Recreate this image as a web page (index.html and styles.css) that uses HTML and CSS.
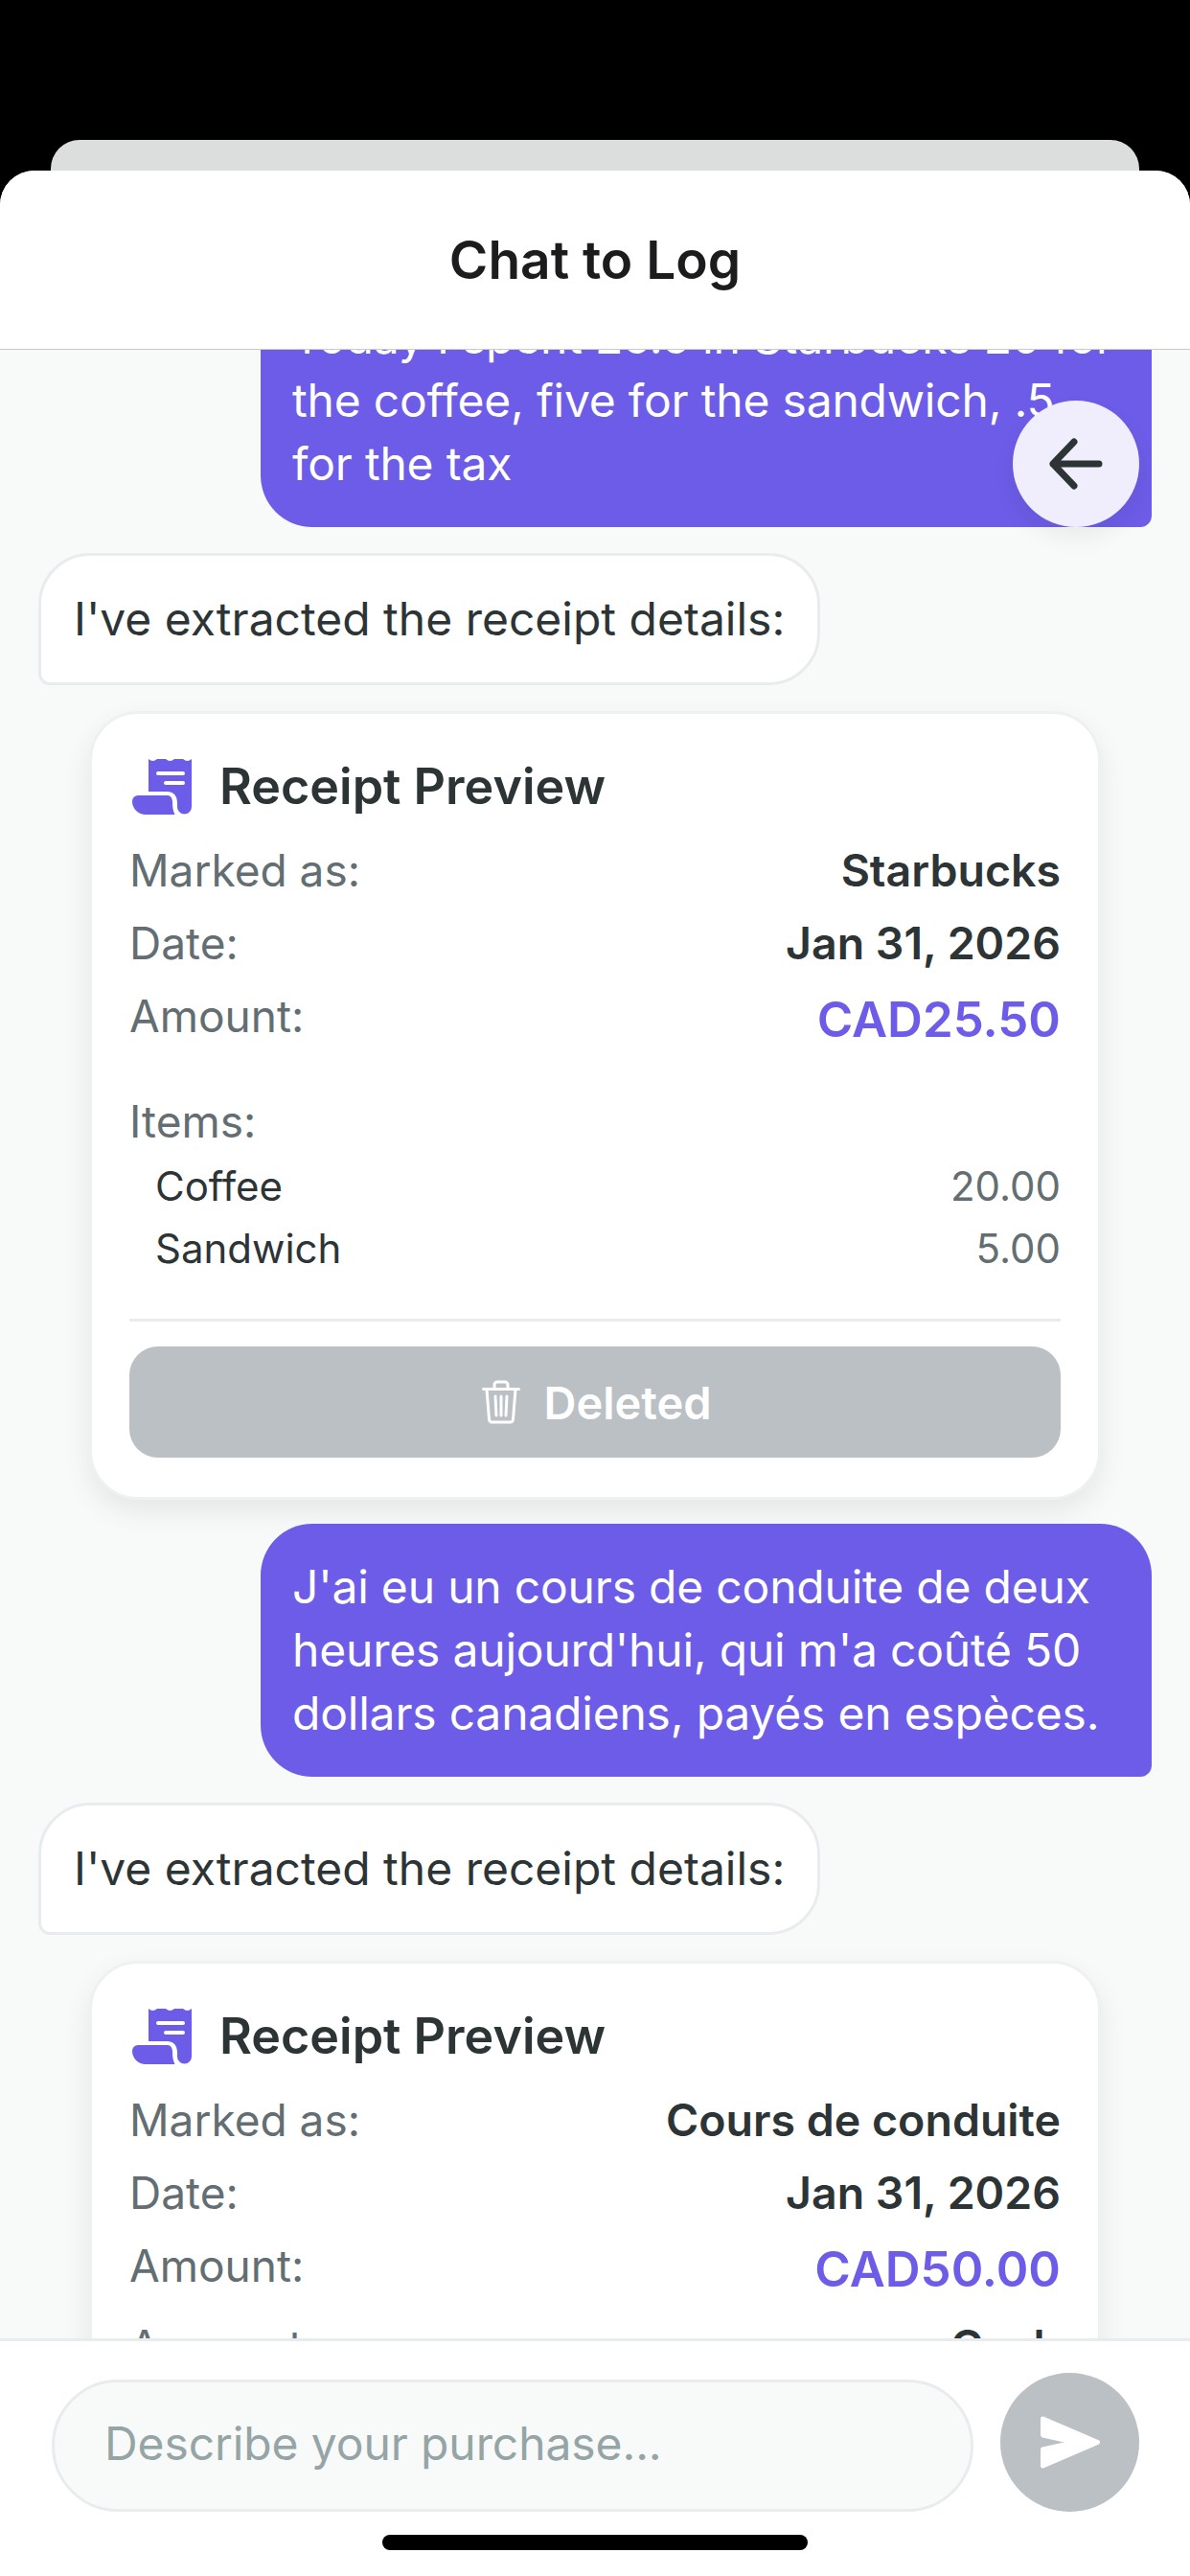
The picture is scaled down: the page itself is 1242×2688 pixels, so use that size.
FILE: index.html
```html
<!DOCTYPE html>
<html lang="en">
<head>
   <meta charset="UTF-8">
   <meta name="viewport" content="width=device-width, initial-scale=1.0">
   <title>Chat to Log</title>
   <link rel="stylesheet" href="styles.css">
</head>
<body>
   <div class="backdrop">
      <div class="peek"></div>
   </div>

   <div class="sheet">
      <header class="sheet-header">Chat to Log</header>

      <main class="chat">
         <div class="chat-list">
            <div class="bubble bubble-user">Today I spent 25.5 in Starbucks 20 for the coffee, five for the sandwich, .5 for the tax</div>
            <div class="bubble bubble-bot">I've extracted the receipt details:</div>

            <section class="receipt">
               <div class="receipt-title">
                  <svg class="receipt-icon" viewBox="0 0 62 58">
                     <path fill="#6c5ce7" d="M17 0q4.500 4 9 0t9 0 9 0 9 0 9 0V50a7.500 7.500 0 0 1-15 0V46c0-8-4-12-11-12H17Z"/>
                     <path fill="#6c5ce7" d="M6 38H37c3 0 5 3 5 7 0 5 .5 9 2.500 13H14A14 14 0 0 1 0 44 6 6 0 0 1 6 38Z"/>
                     <path stroke="#fff" stroke-width="4" stroke-linecap="round" d="M27 15H53M35 25H53"/>
                  </svg>
                  <span>Receipt Preview</span>
               </div>
               <div class="row"><span class="row-label">Marked as:</span><span class="row-value">Starbucks</span></div>
               <div class="row"><span class="row-label">Date:</span><span class="row-value">Jan 31, 2026</span></div>
               <div class="row"><span class="row-label">Amount:</span><span class="row-amount">CAD25.50</span></div>
               <div class="items-label">Items:</div>
               <div class="item"><span>Coffee</span><span class="item-price">20.00</span></div>
               <div class="item"><span>Sandwich</span><span class="item-price">5.00</span></div>
               <div class="receipt-divider"></div>
               <button class="deleted-btn">
                  <svg class="trash-icon" viewBox="0 0 40 46" fill="none" stroke="#fff" stroke-width="3" stroke-linecap="round" stroke-linejoin="round">
                     <path d="M1.500 9.500H38.500M13 9V5a3 3 0 0 1 3-3h8a3 3 0 0 1 3 3v4M5 10l2.500 31a3 3 0 0 0 3 3h19a3 3 0 0 0 3-3L35 10M14 17l1 20M20 17v20M26 17l-1 20"/>
                  </svg>
                  <span>Deleted</span>
               </button>
            </section>

            <div class="bubble bubble-user">J'ai eu un cours de conduite de deux heures aujourd'hui, qui m'a coûté 50 dollars canadiens, payés en espèces.</div>
            <div class="bubble bubble-bot">I've extracted the receipt details:</div>

            <section class="receipt">
               <div class="receipt-title">
                  <svg class="receipt-icon" viewBox="0 0 62 58">
                     <path fill="#6c5ce7" d="M17 0q4.500 4 9 0t9 0 9 0 9 0 9 0V50a7.500 7.500 0 0 1-15 0V46c0-8-4-12-11-12H17Z"/>
                     <path fill="#6c5ce7" d="M6 38H37c3 0 5 3 5 7 0 5 .5 9 2.500 13H14A14 14 0 0 1 0 44 6 6 0 0 1 6 38Z"/>
                     <path stroke="#fff" stroke-width="4" stroke-linecap="round" d="M27 15H53M35 25H53"/>
                  </svg>
                  <span>Receipt Preview</span>
               </div>
               <div class="row"><span class="row-label">Marked as:</span><span class="row-value">Cours de conduite</span></div>
               <div class="row"><span class="row-label">Date:</span><span class="row-value">Jan 31, 2026</span></div>
               <div class="row"><span class="row-label">Amount:</span><span class="row-amount">CAD50.00</span></div>
               <div class="row"><span class="row-label">Account:</span><span class="row-value">Cash</span></div>
            </section>
         </div>
      </main>

      <footer class="composer">
         <div class="composer-row">
            <input class="composer-input" type="text" placeholder="Describe your purchase...">
            <button class="send-btn">
               <svg class="send-icon" viewBox="0 0 62 55">
                  <path fill="#fff" stroke="#fff" stroke-width="5" stroke-linejoin="round" d="M2.500 3 59.500 27.500 2.500 52V35L36 27.500 2.500 20Z"/>
               </svg>
            </button>
         </div>
         <div class="home-bar"></div>
      </footer>

      <button class="back-btn">
         <svg class="back-icon" viewBox="0 0 56 54" fill="none" stroke="#2d3436" stroke-width="7" stroke-linecap="round" stroke-linejoin="round">
            <path d="M52 27H4M26 4 4 27l22 23"/>
         </svg>
      </button>
   </div>
</body>
</html>
```

FILE: styles.css
```css
* {
   box-sizing: border-box;
}
html, body {
   margin: 0;
   height: 2688px;
   overflow: hidden;
}
body {
   display: flex;
   flex-direction: column;
   background: #000;
   font-family: Inter, "Liberation Sans", sans-serif;
   color: #2d3436;
}
.backdrop {
   padding: 146px 53px 0;
}
.peek {
   height: 32px;
   background: #dcdddd;
   border-radius: 30px 30px 0 0;
}
.sheet {
   position: relative;
   flex: 1;
   min-height: 0;
   display: flex;
   flex-direction: column;
   background: #fff;
   border-radius: 36px 36px 0 0;
   overflow: hidden;
}
.sheet-header {
   height: 187px;
   flex: none;
   display: flex;
   align-items: center;
   justify-content: center;
   background: #fff;
   border-bottom: 1px solid #c9cbcc;
   font-size: 55px;
   font-weight: 600;
   color: #1c1c1e;
   position: relative;
   z-index: 1;
}
.chat {
   flex: 1;
   min-height: 0;
   background: #f8f9f9;
   overflow: hidden;
}
.chat-list {
   display: flex;
   flex-direction: column;
   align-items: flex-start;
   gap: 27px;
   margin-top: -79px;
   padding: 0 40px;
}
.bubble {
   font-size: 48px;
   line-height: 66px;
}
.bubble-user {
   align-self: flex-end;
   width: 930px;
   padding: 33px 30px 33px 33px;
   background: #6c5ce7;
   color: #fff;
   letter-spacing: -0.2px;
   border-radius: 54px 54px 12px 54px;
}
.bubble-bot {
   padding: 33px 34px;
   background: #fff;
   border: 3px solid #e9ecef;
   border-radius: 54px 54px 54px 12px;
}
.receipt {
   width: 1056px;
   margin: 0 0 -2px 53px;
   padding: 47px 39px 41px;
   background: #fff;
   border: 3px solid #eef0f2;
   border-radius: 51px;
   box-shadow: 0 12px 30px rgba(0, 0, 0, 0.08);
}
.receipt-title {
   display: flex;
   align-items: center;
   gap: 29px;
   height: 57px;
   margin-bottom: 32px;
   font-size: 52px;
   font-weight: 600;
}
.receipt-icon {
   width: 62px;
   height: 58px;
   margin-left: 3px;
}
.row {
   display: flex;
   justify-content: space-between;
   align-items: flex-start;
   margin-bottom: 22px;
   font-size: 46px;
   line-height: 54px;
}
.row-label {
   color: #636e72;
}
.row-value {
   font-size: 46.5px;
   font-weight: 600;
}
.row-amount {
   font-size: 51px;
   line-height: 62px;
   font-weight: 600;
   color: #6c5ce7;
}
.items-label {
   margin-top: 48px;
   margin-bottom: 14px;
   font-size: 46px;
   line-height: 54px;
   color: #636e72;
}
.item {
   display: flex;
   justify-content: space-between;
   padding-left: 27px;
   margin-bottom: 11px;
   font-size: 42px;
   line-height: 54px;
}
.item-price {
   color: #636e72;
}
.receipt-divider {
   height: 3px;
   margin-top: 46px;
   background: #e9ecef;
}
.deleted-btn {
   width: 100%;
   height: 116px;
   margin-top: 26px;
   padding: 0 0 0 4px;
   display: flex;
   align-items: center;
   justify-content: center;
   gap: 24px;
   background: #bbc0c4;
   border: none;
   border-radius: 30px;
   color: #fff;
   font-family: inherit;
   font-size: 47px;
   font-weight: 600;
}
.trash-icon {
   width: 40px;
   height: 46px;
}
.composer {
   flex: none;
   height: 248px;
   padding-top: 33px;
   background: #fff;
   border-top: 3px solid #e9ecef;
   position: relative;
   z-index: 1;
}
.composer-row {
   display: flex;
   align-items: flex-end;
   gap: 28px;
   padding: 0 53px 0 54px;
}
.composer-input {
   flex: 1;
   min-width: 0;
   height: 138px;
   padding: 0 54px 6px 52px;
   background: #f8f9f9;
   border: 3px solid #e9ecef;
   border-radius: 69px;
   font-family: inherit;
   font-size: 48px;
   letter-spacing: -0.1px;
   color: #2d3436;
}
.composer-input::placeholder {
   color: #95a5a6;
   opacity: 1;
}
.send-btn {
   width: 145px;
   height: 145px;
   flex: none;
   display: flex;
   align-items: center;
   justify-content: center;
   padding: 0;
   background: #bbc0c4;
   border: none;
   border-radius: 50%;
}
.send-icon {
   width: 62px;
   height: 55px;
}
.home-bar {
   width: 444px;
   height: 16px;
   margin: 24px auto 0;
   background: #000;
   border-radius: 8px;
}
/* floats over the chat, doesn't scroll with it */
.back-btn {
   position: absolute;
   top: 240px;
   right: 53px;
   width: 132px;
   height: 132px;
   display: flex;
   align-items: center;
   justify-content: center;
   padding: 0;
   background: #f0eefc;
   border: none;
   border-radius: 50%;
   box-shadow: 0 12px 24px rgba(0, 0, 0, 0.06);
}
.back-icon {
   width: 56px;
   height: 54px;
}
```
